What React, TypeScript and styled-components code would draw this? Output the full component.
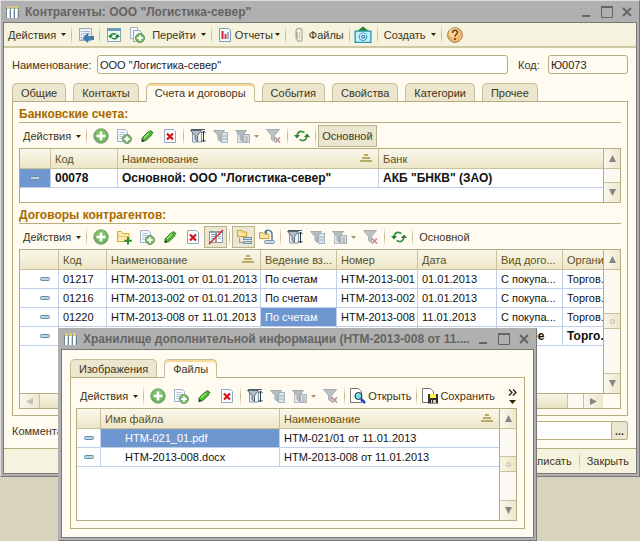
import React from "react";
import styled, { createGlobalStyle, css } from "styled-components";

const c = {
  desktop: "#d8d3bd",
  frame: "#b0b0b0",
  frameDark: "#787878",
  paper: "#fffbf0",
  bar: "#f5f2dd",
  line: "#b5ad80",
  soft: "#ebe6cf",
  text: "#40361a",
  head: "#5e501c",
  accent: "#a86a00",
  blue: "#6f97cf",
  grid: "#bfd0e8",
};

const Global = createGlobalStyle`
  * { box-sizing: border-box; }
  body { margin: 0; background: ${c.desktop}; }
  body, button, input { font-family: "Liberation Sans", Arial, sans-serif; font-size: 11px; color: ${c.text}; }
  button { margin: 0; padding: 0; border: 0; background: none; white-space: nowrap; }
  svg { display: block; flex: none; }
`;

const Desktop = styled.main`
  position: relative;
  min-height: 100vh;
  overflow: hidden;
`;

const Frame = styled.section`
  display: flex;
  flex-direction: column;
  background: ${c.frame};
  border: 1px solid #dcdcdc;
  border-right-color: #777;
  border-bottom-color: #777;
  padding: 0 2px 2px;
`;

const DialogFrame = styled(Frame)`
  position: absolute;
  left: 58px;
  right: 103px;
  top: 328px;
  border-color: #b0b0b0 #777 #777 #b0b0b0;
`;

const TitleBar = styled.header<{ $compact?: boolean }>`
  display: flex;
  align-items: center;
  height: ${(p) => (p.$compact ? 20 : 21)}px;
  padding: 0 4px 0 2px;
  gap: 4px;
  color: #646464;
`;

const Title = styled.h1`
  flex: 1;
  min-width: 0;
  margin: 0;
  overflow: hidden;
  white-space: nowrap;
  font-size: 12px;
  line-height: 18px;
`;

const WindowButtons = styled.div`
  display: flex;
  gap: 8px;
  color: #646464;
  button { color: inherit; }
`;

const Client = styled.div`
  border: 1px solid ${c.frameDark};
  background: ${c.paper};
`;

const MainToolbar = styled.div`
  display: flex;
  align-items: center;
  height: 25px;
  background: ${c.bar};
  border-bottom: 2px solid #cfc8a4;
`;

const Toolbar = styled.div`
  display: flex;
  align-items: center;
  height: 22px;
`;

const TextButton = styled.button<{ $pressed?: boolean; $menu?: boolean; $tight?: boolean }>`
  display: flex;
  align-items: center;
  justify-content: center;
  gap: ${(p) => (p.$menu ? 5 : 2)}px;
  height: 22px;
  padding: 0 ${(p) => (p.$menu || p.$tight ? 2 : 3)}px 0 ${(p) => (p.$tight ? 2 : 3)}px;
  border: 1px solid transparent;
  ${(p) => p.$pressed && css`background: ${c.soft}; border-color: #b8b18c;`}
`;

const IconButton = styled.button<{ $pressed?: boolean; $menu?: boolean }>`
  display: flex;
  align-items: center;
  justify-content: center;
  gap: 3px;
  flex: none;
  width: ${(p) => (p.$menu ? 30 : 23)}px;
  height: 22px;
  border: 1px solid transparent;
  ${(p) => p.$pressed && css`background: ${c.soft}; border-color: #b8b18c;`}
`;

const Separator = styled.span`
  flex: none;
  width: 1px;
  height: 20px;
  margin: 0 2px;
  background: linear-gradient(transparent, #bdb590 50%, transparent);
`;

const More = styled.button`
  display: flex;
  flex-direction: column;
  align-items: center;
  gap: 4px;
  margin-left: auto;
  color: #2c2400;
`;

const Form = styled.div`
  display: flex;
  flex-direction: column;
  padding: 7px 8px 8px;
`;

const Field = styled.div`
  display: flex;
  align-items: center;
`;

const CommentField = styled(Field)`
  margin-top: 5px;
`;

const Label = styled.label<{ $short?: boolean }>`
  flex: none;
  width: ${(p) => (p.$short ? 30 : 85)}px;
`;

const Input = styled.input<{ $tint?: boolean; $joined?: boolean }>`
  flex: 1;
  min-width: 0;
  height: 19px;
  padding: 0 2px;
  border: 1px solid ${c.line};
  border-radius: ${(p) => (p.$joined ? "3px 0 0 3px" : "3px")};
  background: ${(p) => (p.$tint ? c.paper : "#fff")};
  color: #222;
  outline: 0;
`;

const CodeField = styled(Field)`
  width: 110px;
  margin-left: 10px;
`;

const PickButton = styled.button`
  width: 16px;
  height: 19px;
  border: 1px solid ${c.line};
  border-left: 0;
  border-radius: 0 3px 3px 0;
  background: ${c.soft};
  font-weight: bold;
`;

const Tabs = styled.div`
  display: flex;
  gap: 7px;
`;

const Tab = styled.button<{ $active?: boolean }>`
  height: 19px;
  padding: 0 8px;
  border: 1px solid #c4bd98;
  border-bottom-color: ${(p) => (p.$active ? c.paper : c.line)};
  border-radius: 5px 5px 0 0;
  background: ${(p) => (p.$active ? c.paper : "#ebe6cd")};
  margin-bottom: -1px;
  ${(p) => p.$active && css`position: relative; box-shadow: inset 0 2px #fbd997;`}
`;

const MainTabs = styled(Tabs)`
  margin-top: 9px;
`;

const Panel = styled.div`
  border: 1px solid ${c.line};
  padding: 5px 6px 6px;
`;

const DialogBody = styled.div`
  padding: 9px 8px 8px;
`;

const DialogPanel = styled(Panel)`
  padding: 7px 7px 7px 5px;
`;

const GroupTitle = styled.h2`
  margin: 0 0 2px;
  padding-bottom: 1px;
  border-bottom: 1px solid ${c.line};
  color: ${c.accent};
  font-size: 12px;
  line-height: 14px;
`;

const SecondGroup = styled.section`
  margin-top: 5px;
`;

const Grid = styled.div<{ $h: number }>`
  display: grid;
  grid-template-columns: minmax(0, 1fr) 17px;
  grid-template-rows: minmax(0, 1fr) auto;
  height: ${(p) => p.$h}px;
  margin-top: 1px;
  border: 1px solid ${c.line};
  background: #fff;
`;

const Sheet = styled.div`
  overflow: hidden;
`;

const Table = styled.table`
  width: 100%;
  table-layout: fixed;
  border-collapse: separate;
  border-spacing: 0;
`;

const Th = styled.th`
  height: 20px;
  padding: 0 0 0 4px;
  overflow: hidden;
  white-space: nowrap;
  text-align: left;
  font-weight: normal;
  color: ${c.head};
  border-right: 1px solid #c9c29c;
  border-bottom: 1px solid #c9c29c;
  background: linear-gradient(#faf8ec, #ece6c6);
  &:last-child { border-right: 0; }
`;

const HeadContent = styled.div`
  display: flex;
  align-items: center;
  justify-content: space-between;
  padding-right: 6px;
`;

const Td = styled.td<{ $selected?: boolean; $indent?: boolean }>`
  height: 19px;
  padding: 0 0 0 ${(p) => (p.$indent ? 24 : 4)}px;
  overflow: hidden;
  white-space: nowrap;
  color: ${(p) => (p.$selected ? "#fff" : "#111")};
  background: ${(p) => (p.$selected ? c.blue : "#fff")};
  border-right: 1px solid ${c.grid};
  border-bottom: 1px solid ${c.grid};
  &:last-child { border-right: 0; }
`;

const Row = styled.tr<{ $bold?: boolean }>`
  font-weight: ${(p) => (p.$bold ? "bold" : "normal")};
  font-size: ${(p) => (p.$bold ? 12 : 11)}px;
`;

const MarkCell = styled(Td)<{ $right?: boolean }>`
  padding: 0 ${(p) => (p.$right ? 8 : 0)}px 0 0;
  svg { margin: 0 ${(p) => (p.$right ? "0" : "auto")} 0 auto; }
`;

const VBar = styled.div`
  display: flex;
  flex-direction: column;
  border-left: 1px solid ${c.line};
  background: #fbf9f1;
`;

const HBar = styled.div`
  display: flex;
  height: 15px;
  border-top: 1px solid ${c.line};
  background: #fbf9f1;
`;

const Corner = styled.div`
  background: ${c.paper};
  border-top: 1px solid ${c.line};
`;

const Arrow = styled.button<{ $edge: "top" | "bottom" | "left" | "right" }>`
  display: flex;
  align-items: center;
  justify-content: center;
  flex: none;
  width: ${(p) => (p.$edge === "left" || p.$edge === "right" ? "20px" : "auto")};
  height: ${(p) => (p.$edge === "top" || p.$edge === "bottom" ? "20px" : "auto")};
  background: linear-gradient(90deg, #faf8ec, #ece7cc);
  border: 0 solid #c9c29c;
  ${(p) => p.$edge === "top" && css`border-bottom-width: 1px;`}
  ${(p) => p.$edge === "bottom" && css`border-top-width: 1px;`}
  ${(p) => p.$edge === "left" && css`border-right-width: 1px;`}
  ${(p) => p.$edge === "right" && css`border-left-width: 1px;`}
`;

const Track = styled.div<{ $grow: number }>`
  flex: ${(p) => p.$grow} 0 0;
`;

const VThumb = styled.div`
  display: flex;
  align-items: center;
  justify-content: center;
  height: 16px;
  border: solid #c9c29c;
  border-width: 1px 0;
  background: linear-gradient(90deg, #f8f5e6, #ebe5c8);
`;

const HThumb = styled.div`
  flex: 1;
  border-right: 1px solid #c9c29c;
  background: linear-gradient(#f8f5e6, #e9e3c4);
`;

const HTrack = styled.div`
  width: 15px;
`;

const Footer = styled.footer`
  display: flex;
  align-items: center;
  justify-content: flex-end;
  gap: 1px;
  height: 25px;
  padding-right: 3px;
  background: ${c.bar};
  border-top: 1px solid ${c.line};
`;

const Caret = ({ muted }: { muted?: boolean }) => (
  <svg width="5" height="3" viewBox="0 0 5 3"><path d="M0 0h5L2.5 3z" fill={muted ? "#a8955c" : "#2c2400"} /></svg>
);

const Svg = ({ children, size = 16 }: { children: React.ReactNode; size?: number }) => (
  <svg width={size} height={size} viewBox="0 0 16 16" aria-hidden="true">{children}</svg>
);

const Page = () => (
  <>
    <path d="M1.5 1.5h8l2 2v10h-10z" fill="#f4f8fc" stroke="#9fb2c4" />
    <path d="M3.5 4.5h5M3.5 6.5h6M3.5 8.5h6M3.5 10.5h4" stroke="#b3c4d3" />
  </>
);

const TableIcon = () => (
  <Svg>
    <path d="M2 3h3v11H2zM6 3h3v11H6zM10 3h3v11h-3z" fill="#fff" />
    <path d="M2 2h3v3H2zM6 2h3v3H6zM10 2h3v3h-3z" fill="#e9c65e" />
    <path d="M1.500 4v10M5.500 4v10M9.500 4v10M13.500 4v10" stroke="#6c8594" />
    <path d="M4.500 6v8M8.500 6v8M12.500 6v8" stroke="#c2d9e8" />
  </Svg>
);

const SaveListIcon = () => (
  <Svg>
    <path d="M1.5 1.5h12v12h-12z" fill="#eef5fa" stroke="#93a9ba" />
    <path d="M3 4.500h1M3 7.500h1M3 10.500h1" stroke="#5781a0" />
    <path d="M5 4.500h7M5 6.500h7M5 8.500h4M3 12.500h4" stroke="#9fb8ca" />
    <path d="M5 11l5-4.500V9.500h6v3h-6V15.500z" fill="#3e7fb4" stroke="#245f91" strokeWidth=".6" />
  </Svg>
);

const RefreshIcon = () => (
  <Svg>
    <path d="M3 8C3.500 4.500 6 3.300 8 3.500l2.500 1" fill="none" stroke="#31903a" strokeWidth="1.700" />
    <path d="M13 8c-.5 3.500-3 4.700-5 4.500l-2.500-1" fill="none" stroke="#31903a" strokeWidth="1.700" />
    <path d="M0 7h6l-3 3.500zM10 9h6l-3-3.500z" fill="#268030" />
  </Svg>
);

const RefreshFormIcon = () => (
  <Svg>
    <rect x="1.500" y="1.500" width="13" height="13" fill="#eef8f5" stroke="#86a3b7" />
    <path d="M1 1h14v3H1z" fill="#6e9ab9" />
    <path d="M4.500 9C5 6.500 8 6 10 7.500M11.500 9.500c-.5 2.500-3.500 3-5.500 1.500" fill="none" stroke="#258c33" strokeWidth="1.500" />
    <path d="M2 8.500h5l-2.500 3zM9 10h5l-2.500-3z" fill="#187f29" />
  </Svg>
);

const AddIcon = () => (
  <Svg>
    <circle cx="8" cy="8" r="7.300" fill="#68ae56" stroke="#8baa86" />
    <circle cx="8" cy="7" r="5.500" fill="#8cca73" opacity=".7" />
    <path d="M8 3.500v9M3.500 8h9" stroke="#fff" strokeWidth="2.600" />
  </Svg>
);

const CopyIcon = () => (
  <Svg>
    <Page />
    <circle cx="11" cy="11" r="4.500" fill="#79b967" stroke="#719a6b" />
    <path d="M11 8.300v5.400M8.300 11h5.400" stroke="#fff" strokeWidth="1.800" />
  </Svg>
);

const CopyPagesIcon = () => (
  <Svg>
    <path d="M1.500.5h7v11h-7z" fill="#f4f8fc" stroke="#9fb2c4" />
    <path d="M4.500 3.500h6l2 2v9h-8z" fill="#f4f8fc" stroke="#8fa9bd" />
    <circle cx="11" cy="11" r="4.500" fill="#79b967" stroke="#568f50" />
    <path d="M11 8.300v5.400M8.300 11h5.400" stroke="#fff" strokeWidth="1.800" />
  </Svg>
);

const PencilIcon = () => (
  <Svg>
    <path d="M3 10l6.500-6.500 3.500 3L7 12.500l-4 1z" fill="#51b832" stroke="#247c1d" />
    <path d="M5 10l5-5" stroke="#a1e37c" strokeWidth="1.300" />
    <path d="M2.500 14l.8-3 2 2z" fill="#333" />
    <path d="M10 3l1.500-1 3 2.500-1 1.500z" fill="#308f22" />
  </Svg>
);

const DeleteIcon = () => (
  <Svg>
    <path d="M2.500 1.500h9l2 2v11h-11z" fill="#fbfdff" stroke="#8ea9bf" />
    <path d="M5 5.500l6 6M11 5.500l-6 6" stroke="#d41212" strokeWidth="2.200" />
  </Svg>
);

const Funnel = ({ fill, stroke }: { fill: string; stroke: string }) => (
  <path d="M.5 2.500h11l-4 5v6l-2.500-2v-4z" fill={fill} stroke={stroke} />
);

const FilterSetupIcon = () => (
  <Svg>
    <path d="M1 1.500h14" stroke="#4b5962" />
    <path d="M2.500 4v10h9V4" fill="#edf2f6" stroke="#8195a2" />
    <Funnel fill="#b3bdc4" stroke="#5b6a76" />
    <path d="M13.500 3v11M11.500 5l2-2 2 2M11.500 12l2 2 2-2" fill="none" stroke="#233a4b" />
  </Svg>
);

const FilterValueIcon = () => (
  <Svg>
    <rect x="8.500" y="4.500" width="6" height="10" fill="#dbe5eb" stroke="#a5b6c1" />
    <path d="M9 8h5M9 11h5" stroke="#9cb0bc" />
    <Funnel fill="#b7bec2" stroke="#a2abb0" />
  </Svg>
);

const FilterListIcon = () => (
  <Svg>
    <rect x="2.500" y="4.500" width="7" height="10" fill="#e5e9eb" stroke="#b4bdc3" />
    <rect x="8.500" y="6.500" width="6" height="8" fill="#d8dde0" stroke="#a8b1b7" />
    <path d="M10 9h3M10 11h3M10 13h3" stroke="#9eabb3" />
    <Funnel fill="#b5babd" stroke="#a4abb0" />
  </Svg>
);

const FilterOffIcon = () => (
  <Svg>
    <path d="M.5 1.500h13l-5 6v6l-3-2v-4z" fill="#bdc1c3" stroke="#a6adb1" />
    <path d="M9 9.500l5 5M14 9.500l-5 5" stroke="#bd8f91" strokeWidth="1.700" />
  </Svg>
);

const FolderAddIcon = () => (
  <Svg>
    <path d="M1.500 12.500v-10h4l1.500 2h6v8z" fill="#fbe9ae" stroke="#d2a748" />
    <path d="M2 7.500h10.500" stroke="#e6c46f" />
    <path d="M12 8v7.500M8.300 11.800h7.500" stroke="#29912c" strokeWidth="2" />
  </Svg>
);

const HideIcon = () => (
  <Svg>
    <path d="M1.500 2.500h6v11h-6zM8.500 2.500h6v11h-6z" fill="#fff" stroke="#8594a4" />
    <path d="M2 3.500h12M3 5.500h4M3 7.500h4M3 9.500h4M10 5.500h3M10 7.500h3M10 9.500h3" stroke="#91a2b2" />
    <path d="M1 15L15 1" stroke="#d6252d" strokeWidth="1.500" />
  </Svg>
);

const HierarchyIcon = () => (
  <Svg>
    <path d="M1.500 7.500v-6h4l1 1.500h4v4.500z" fill="#fbe3a0" stroke="#cf9f3c" />
    <path d="M3.500 9v4.500H7" fill="none" stroke="#8b9aa3" />
    <rect x="7.500" y="8.500" width="8" height="2" fill="#c9dce7" stroke="#7795a8" />
    <rect x="7.500" y="12.500" width="8" height="2" fill="#c9dce7" stroke="#7795a8" />
  </Svg>
);

const FolderMoveIcon = () => (
  <Svg>
    <path d="M.5 9.500v-6h3L5 5h5v4.500z" fill="#fbe3a0" stroke="#cf9f3c" />
    <path d="M6 3c1-2.500 7-2.500 7 2v6" fill="none" stroke="#58788c" strokeWidth="1.500" />
    <path d="M5 3.500l3-3v5z" fill="#58788c" />
    <rect x="5.500" y="11.500" width="10" height="3" rx="1" fill="#c9dce7" stroke="#7795a8" />
  </Svg>
);

const ReportIcon = () => (
  <Svg>
    <path d="M2.500 1.500h9l2 2v11h-11z" fill="#f5faff" stroke="#7f9bb1" />
    <path d="M5.500 4v8" stroke="#cf2424" strokeWidth="2" />
    <path d="M8.500 7v5" stroke="#dc3d3d" strokeWidth="2" />
    <path d="M11 5v7" stroke="#3971ba" />
  </Svg>
);

const ClipIcon = () => (
  <Svg>
    <path d="M6 5v7c0 3 5 3 5 0V4c0-3.500-6-3.500-6 0v8" fill="none" stroke="#a7a9a4" strokeWidth="1.200" />
    <path d="M8.500 5v7" stroke="#c5c5be" />
  </Svg>
);

const MailIcon = () => (
  <Svg size={18}>
    <path d="M2 5l6-4.500L14 5z" fill="#1d8826" />
    <path d="M1 4.500h14v10H1z" fill="#c4f0fa" stroke="#2d94b4" strokeWidth="1.200" />
    <circle cx="8" cy="9.500" r="3.300" fill="#e5fbff" stroke="#43a8cc" />
    <circle cx="8" cy="9.500" r="1.300" fill="none" stroke="#2b85ae" />
    <path d="M9.300 8v2.300c.8.8 2 .2 2-.8" fill="none" stroke="#2b85ae" strokeWidth=".8" />
  </Svg>
);

const HelpIcon = () => (
  <Svg>
    <circle cx="8" cy="8" r="7.400" fill="#f3b765" stroke="#9b8360" />
    <circle cx="7" cy="6" r="5" fill="#ffe2ad" opacity=".7" />
    <path d="M5.500 6c0-3.500 5-3.500 5-.5C10.500 7.500 8 7.500 8 9.800" fill="none" stroke="#6b411c" strokeWidth="1.600" />
    <circle cx="8" cy="12" r="1.100" fill="#6b411c" />
  </Svg>
);

const OpenIcon = () => (
  <Svg>
    <path d="M.5.5h8l3 3v11H.5z" fill="#fff" stroke="#777" />
    <circle cx="8.500" cy="8" r="3.500" fill="#70dcea" stroke="#222" />
    <path d="M11 11l4 4" stroke="#1643cf" strokeWidth="2.500" />
    <path d="M7 7l1-1" stroke="#fff" />
  </Svg>
);

const SaveIcon = () => (
  <Svg>
    <path d="M.5.5h8l3 3v11H.5z" fill="#fff" stroke="#777" />
    <path d="M6 6h10v9.500H6z" fill="#333" />
    <path d="M8 6h6v4H8z" fill="#fff04a" />
    <path d="M9 12h5v3H9z" fill="#ccc" />
    <path d="M10 12h1v3h-1z" fill="#333" />
  </Svg>
);

const SortIcon = () => (
  <svg width="12" height="9" viewBox="0 0 12 9"><path d="M4 1h4M2 4h8M0 7h12" stroke="#b9a966" strokeWidth="2" /></svg>
);

const Mark = () => (
  <svg width="10" height="4" viewBox="0 0 10 4"><rect x=".5" y=".5" width="9" height="3" rx="1" fill="#b9d5e5" stroke="#668ba4" /></svg>
);

const MinIcon = () => <svg width="12" height="12" viewBox="0 0 12 12"><path d="M1 10h8" stroke="currentColor" strokeWidth="2" /></svg>;
const MaxIcon = () => <svg width="12" height="12" viewBox="0 0 12 12"><path d="M.5 1h11v10.500H.5z" fill="none" stroke="currentColor" /><path d="M0 1h12" stroke="currentColor" strokeWidth="2" /></svg>;
const CloseIcon = () => <svg width="12" height="12" viewBox="0 0 12 12"><path d="M2 2l8 8M10 2l-8 8" stroke="currentColor" strokeWidth="2" /></svg>;

type Dir = "top" | "bottom" | "left" | "right";
const triangles: Record<Dir, string> = {
  top: "M1 8h7L4.500 1z",
  bottom: "M1 1h7L4.500 8z",
  left: "M8 1v7L1 4.500z",
  right: "M1 1v7l7-3.500z",
};
const dirNames: Record<Dir, string> = { top: "Вверх", bottom: "Вниз", left: "Влево", right: "Вправо" };

function ScrollArrow({ dir }: { dir: Dir }) {
  return (
    <Arrow type="button" $edge={dir} aria-label={dirNames[dir]}>
      <svg width="9" height="9" viewBox="0 0 9 9"><path d={triangles[dir]} fill={dir === "left" ? "#c4c2b6" : "#858585"} /></svg>
    </Arrow>
  );
}

function VScroll({ before, after }: { before?: number; after?: number }) {
  return (
    <VBar>
      <ScrollArrow dir="top" />
      <Track $grow={before ?? 1} />
      {before && <VThumb><svg width="5" height="5" viewBox="0 0 5 5"><circle cx="2.500" cy="2.500" r="2" fill="#eee9d5" stroke="#c3bda2" /></svg></VThumb>}
      {after && <Track $grow={after} />}
      <ScrollArrow dir="bottom" />
    </VBar>
  );
}

function TitleRow({ children, compact }: { children: string; compact?: boolean }) {
  return (
    <TitleBar $compact={compact}>
      <TableIcon />
      <Title>{children}</Title>
      <WindowButtons>
        <button type="button" aria-label="Свернуть"><MinIcon /></button>
        <button type="button" aria-label="Развернуть"><MaxIcon /></button>
        <button type="button" aria-label="Закрыть окно"><CloseIcon /></button>
      </WindowButtons>
    </TitleBar>
  );
}

const MenuButton = ({ children }: { children: string }) => <TextButton type="button" $menu>{children}<Caret /></TextButton>;

const Tool = ({ label, icon, pressed }: { label: string; icon: React.ReactNode; pressed?: boolean }) => (
  <IconButton type="button" aria-label={label} $pressed={pressed}>{icon}</IconButton>
);

function FilterTools() {
  return (
    <>
      <Separator />
      <Tool label="Настройка отбора" icon={<FilterSetupIcon />} />
      <Tool label="Отбор по значению" icon={<FilterValueIcon />} />
      <IconButton type="button" aria-label="История отборов" $menu><FilterListIcon /><Caret muted /></IconButton>
      <Tool label="Отключить отбор" icon={<FilterOffIcon />} />
      <Separator />
    </>
  );
}

function EditTools() {
  return (
    <>
      <Tool label="Скопировать" icon={<CopyIcon />} />
      <Tool label="Изменить" icon={<PencilIcon />} />
      <Tool label="Удалить" icon={<DeleteIcon />} />
    </>
  );
}

const tabs = ["Общие", "Контакты", "Счета и договоры", "События", "Свойства", "Категории", "Прочее"];

const contracts = [
  { cells: ["01217", "НТМ-2013-001 от 01.01.2013", "По счетам", "НТМ-2013-001", "01.01.2013", "С покупа...", "Торгов."] },
  { cells: ["01216", "НТМ-2013-002 от 01.01.2013", "По счетам", "НТМ-2013-002", "01.01.2013", "С покупа...", "Торгов."] },
  { cells: ["01220", "НТМ-2013-008 от 11.01.2013", "По счетам", "НТМ-2013-008", "11.01.2013", "С покупа...", "Торгов."], selected: 2 },
  { cells: ["", "", "", "", "", "Прочее", "Торго."], bold: true },
];

const files = [
  { name: "НТМ-021_01.pdf", title: "НТМ-021/01 от 11.01.2013", selected: true },
  { name: "НТМ-2013-008.docx", title: "НТМ-2013-008 от 11.01.2013", selected: false },
];

const Cols = ({ widths }: { widths: number[] }) => (
  <colgroup>{widths.map((w, i) => <col key={i} width={w} />)}<col /></colgroup>
);

function Accounts() {
  return (
    <section>
      <GroupTitle>Банковские счета:</GroupTitle>
      <Toolbar>
        <MenuButton>Действия</MenuButton>
        <Separator />
        <Tool label="Добавить" icon={<AddIcon />} />
        <EditTools />
        <FilterTools />
        <Tool label="Обновить" icon={<RefreshIcon />} />
        <Separator />
        <TextButton type="button" $pressed>Основной</TextButton>
      </Toolbar>
      <Grid $h={55}>
        <Sheet>
          <Table>
            <Cols widths={[31, 67, 261]} />
            <thead>
              <tr>
                <Th />
                <Th>Код</Th>
                <Th><HeadContent>Наименование <SortIcon /></HeadContent></Th>
                <Th>Банк</Th>
              </tr>
            </thead>
            <tbody>
              <Row $bold>
                <MarkCell $selected><Mark /></MarkCell>
                <Td>00078</Td>
                <Td>Основной: ООО "Логистика-север"</Td>
                <Td>АКБ "БНКВ" (ЗАО)</Td>
              </Row>
            </tbody>
          </Table>
        </Sheet>
        <VScroll />
      </Grid>
    </section>
  );
}

function Contracts() {
  return (
    <SecondGroup>
      <GroupTitle>Договоры контрагентов:</GroupTitle>
      <Toolbar>
        <MenuButton>Действия</MenuButton>
        <Separator />
        <Tool label="Добавить" icon={<AddIcon />} />
        <Tool label="Новая группа" icon={<FolderAddIcon />} />
        <EditTools />
        <Tool label="Показать неактивные" icon={<HideIcon />} pressed />
        <Separator />
        <Tool label="Иерархия" icon={<HierarchyIcon />} pressed />
        <Tool label="Переместить в группу" icon={<FolderMoveIcon />} />
        <FilterTools />
        <Tool label="Обновить" icon={<RefreshIcon />} />
        <Separator />
        <TextButton type="button">Основной</TextButton>
      </Toolbar>
      <Grid $h={160}>
        <Sheet>
          <Table>
            <Cols widths={[39, 48, 154, 76, 81, 79, 66]} />
            <thead>
              <tr>
                <Th />
                <Th>Код</Th>
                <Th><HeadContent>Наименование <SortIcon /></HeadContent></Th>
                <Th>Ведение вз...</Th>
                <Th>Номер</Th>
                <Th>Дата</Th>
                <Th>Вид дого...</Th>
                <Th>Органи</Th>
              </tr>
            </thead>
            <tbody>
              {contracts.map((r, i) => (
                <Row key={i} $bold={r.bold}>
                  <MarkCell $right><Mark /></MarkCell>
                  {r.cells.map((t, j) => <Td key={j} $selected={r.selected === j}>{t}</Td>)}
                </Row>
              ))}
            </tbody>
          </Table>
        </Sheet>
        <VScroll before={43} after={44} />
        <HBar>
          <ScrollArrow dir="left" />
          <HThumb />
          <HTrack />
          <ScrollArrow dir="right" />
        </HBar>
        <Corner />
      </Grid>
    </SecondGroup>
  );
}

function FilesDialog() {
  return (
    <DialogFrame role="dialog" aria-label="Хранилище дополнительной информации">
      <TitleRow compact>Хранилище дополнительной информации (НТМ-2013-008 от 11....</TitleRow>
      <Client>
        <DialogBody>
          <Tabs role="tablist">
            <Tab type="button" role="tab">Изображения</Tab>
            <Tab type="button" role="tab" aria-selected $active>Файлы</Tab>
          </Tabs>
          <DialogPanel>
            <Toolbar>
              <MenuButton>Действия</MenuButton>
              <Separator />
              <Tool label="Добавить" icon={<AddIcon />} />
              <EditTools />
              <FilterTools />
              <TextButton type="button" $tight><OpenIcon />Открыть</TextButton>
              <Separator />
              <TextButton type="button" $tight><SaveIcon />Сохранить</TextButton>
              <More type="button" aria-label="Ещё">
                <svg width="9" height="7" viewBox="0 0 9 7"><path d="M1 .5l3 3-3 3M5 .5l3 3-3 3" fill="none" stroke="currentColor" strokeWidth="1.300" /></svg>
                <svg width="7" height="4" viewBox="0 0 7 4"><path d="M0 0h7L3.500 4z" fill="currentColor" /></svg>
              </More>
            </Toolbar>
            <Grid $h={113}>
              <Sheet>
                <Table>
                  <Cols widths={[24, 179]} />
                  <thead>
                    <tr>
                      <Th />
                      <Th>Имя файла</Th>
                      <Th><HeadContent>Наименование <SortIcon /></HeadContent></Th>
                    </tr>
                  </thead>
                  <tbody>
                    {files.map((f) => (
                      <Row key={f.name}>
                        <MarkCell><Mark /></MarkCell>
                        <Td $indent $selected={f.selected}>{f.name}</Td>
                        <Td>{f.title}</Td>
                      </Row>
                    ))}
                  </tbody>
                </Table>
              </Sheet>
              <VScroll before={27} after={28} />
            </Grid>
          </DialogPanel>
        </DialogBody>
      </Client>
    </DialogFrame>
  );
}

export default function App() {
  return (
    <Desktop>
      <Global />
      <Frame>
        <TitleRow>Контрагенты: ООО "Логистика-север"</TitleRow>
        <Client>
          <MainToolbar>
            <MenuButton>Действия</MenuButton>
            <Separator />
            <Tool label="Записать элемент" icon={<SaveListIcon />} />
            <Separator />
            <Tool label="Перечитать" icon={<RefreshFormIcon />} />
            <Tool label="Скопировать" icon={<CopyPagesIcon />} />
            <MenuButton>Перейти</MenuButton>
            <Separator />
            <TextButton type="button" $tight><ReportIcon />Отчеты <Caret /></TextButton>
            <Separator />
            <TextButton type="button" $tight><ClipIcon />Файлы</TextButton>
            <Separator />
            <Tool label="Почта" icon={<MailIcon />} />
            <Separator />
            <MenuButton>Создать</MenuButton>
            <Separator />
            <Tool label="Справка" icon={<HelpIcon />} />
          </MainToolbar>
          <Form>
            <Field>
              <Label htmlFor="name">Наименование:</Label>
              <Input id="name" defaultValue={'ООО "Логистика-север"'} />
              <CodeField>
                <Label htmlFor="code" $short>Код:</Label>
                <Input id="code" defaultValue="Ю0073" $tint />
              </CodeField>
            </Field>
            <MainTabs role="tablist">
              {tabs.map((t, i) => <Tab key={t} type="button" role="tab" aria-selected={i === 2} $active={i === 2}>{t}</Tab>)}
            </MainTabs>
            <Panel>
              <Accounts />
              <Contracts />
            </Panel>
            <CommentField>
              <Label htmlFor="comment">Комментарий:</Label>
              <Input id="comment" $joined />
              <PickButton type="button" aria-label="Выбрать">...</PickButton>
            </CommentField>
          </Form>
          <Footer>
            <TextButton type="button">Записать</TextButton>
            <Separator />
            <TextButton type="button">Закрыть</TextButton>
          </Footer>
        </Client>
      </Frame>
      <FilesDialog />
    </Desktop>
  );
}
